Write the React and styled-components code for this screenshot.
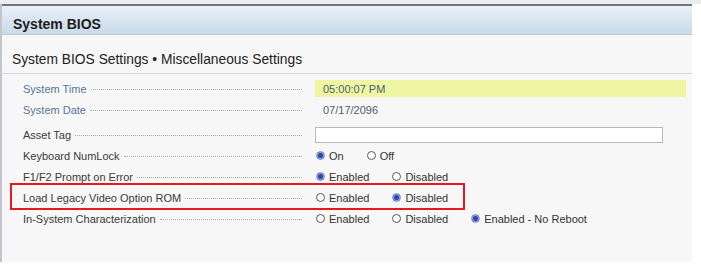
import styled, { createGlobalStyle } from "styled-components";

const GlobalStyle = createGlobalStyle`
  body {
    margin: 0;
    background: #ffffff;
    font-family: "Liberation Sans", Arial, sans-serif;
  }
`;

const Page = styled.div`
  width: 701px;
  height: 274px;
  padding-top: 4px;
  background: linear-gradient(#ececec, #ececec) top / 100% 4px no-repeat, #ffffff;
  box-sizing: border-box;
`;

const Frame = styled.div`
  width: 690px;
  height: 258px;
  border-left: 2px solid #c3c5cc;
  background: #f7f7f7;
`;

const Header = styled.div`
  height: 31px;
  box-sizing: border-box;
  border-top: 2px solid #6e767f;
  border-bottom: 1px solid #b9c9d8;
  background: linear-gradient(#e9f1f9, #c8d9e8);
  display: flex;
  align-items: flex-end;
  padding: 0 0 2px 11px;
  font-size: 14px;
  font-weight: bold;
  color: #1b1b1b;
`;

const Subtitle = styled.div`
  height: 39px;
  border-bottom: 1px solid #dadada;
  display: flex;
  align-items: flex-end;
  padding: 0 0 6px 10px;
  box-sizing: border-box;
  font-size: 13.8px;
  color: #222;
`;

const List = styled.div`
  padding-top: 4px;
`;

const Row = styled.div`
  position: relative;
  height: 21px;
  display: grid;
  grid-template-columns: 279px 1fr;
  column-gap: 13px;
  align-items: center;
  padding-left: 21px;
  margin-top: ${(p) => (p.$spaced ? "4px" : "0")};
  font-size: 11px;

  ${(p) =>
    p.$marked &&
    `
    &::after {
      content: "";
      position: absolute;
      left: 8px;
      top: -4px;
      width: 451px;
      height: 23px;
      border: 2px solid #e8191c;
    }
  `}
`;

const Label = styled.div`
  display: flex;
  align-items: center;
  color: ${(p) => (p.$readonly ? "#56759a" : "#3a3a3a")};
  white-space: nowrap;
`;

const Leader = styled.span`
  flex: 1;
  margin: 2px 0 0 4px;
  border-bottom: 1px dotted #a9a9a9;
`;

const Highlight = styled.div`
  height: 17px;
  width: 371px;
  background: #eff6a3;
  display: flex;
  align-items: center;
  padding-left: 8px;
  box-sizing: border-box;
  color: #4e5e6e;
`;

const Plain = styled.div`
  padding-left: 8px;
  color: #4e5e6e;
`;

const TextBox = styled.div`
  width: 348px;
  height: 16px;
  box-sizing: border-box;
  border: 1px solid #b9b9b9;
  background: #ffffff;
`;

const Options = styled.div`
  display: flex;
  align-items: center;
  gap: 23px;
  padding-left: 1px;
`;

const Option = styled.span`
  display: flex;
  align-items: center;
  gap: 4px;
  color: #333;
`;

const Dot = styled.span`
  width: 9px;
  height: 9px;
  border-radius: 50%;
  box-sizing: border-box;
  ${(p) =>
    p.$on
      ? `background: radial-gradient(circle, #2f45b5 0 2px, #8d9dd6 3px);
         border: 1px solid #7d8cc4;`
      : `background: #ffffff;
         border: 1px solid #595959;`}
`;

const Radio = ({ on, children }) => (
  <Option>
    <Dot $on={on} />
    {children}
  </Option>
);

const Field = ({ label, readonly, children, ...rest }) => (
  <Row {...rest}>
    <Label $readonly={readonly}>
      {label}
      <Leader />
    </Label>
    {children}
  </Row>
);

export default function App() {
  return (
    <Page>
      <GlobalStyle />
      <Frame>
        <Header>System BIOS</Header>
        <Subtitle>System BIOS Settings • Miscellaneous Settings</Subtitle>
        <List>
          <Field label="System Time" readonly>
            <Highlight>05:00:07 PM</Highlight>
          </Field>
          <Field label="System Date" readonly>
            <Plain>07/17/2096</Plain>
          </Field>
          <Field label="Asset Tag" $spaced>
            <TextBox />
          </Field>
          <Field label="Keyboard NumLock">
            <Options>
              <Radio on>On</Radio>
              <Radio>Off</Radio>
            </Options>
          </Field>
          <Field label="F1/F2 Prompt on Error">
            <Options>
              <Radio on>Enabled</Radio>
              <Radio>Disabled</Radio>
            </Options>
          </Field>
          <Field label="Load Legacy Video Option ROM" $marked>
            <Options>
              <Radio>Enabled</Radio>
              <Radio on>Disabled</Radio>
            </Options>
          </Field>
          <Field label="In-System Characterization">
            <Options>
              <Radio>Enabled</Radio>
              <Radio>Disabled</Radio>
              <Radio on>Enabled - No Reboot</Radio>
            </Options>
          </Field>
        </List>
      </Frame>
    </Page>
  );
}
